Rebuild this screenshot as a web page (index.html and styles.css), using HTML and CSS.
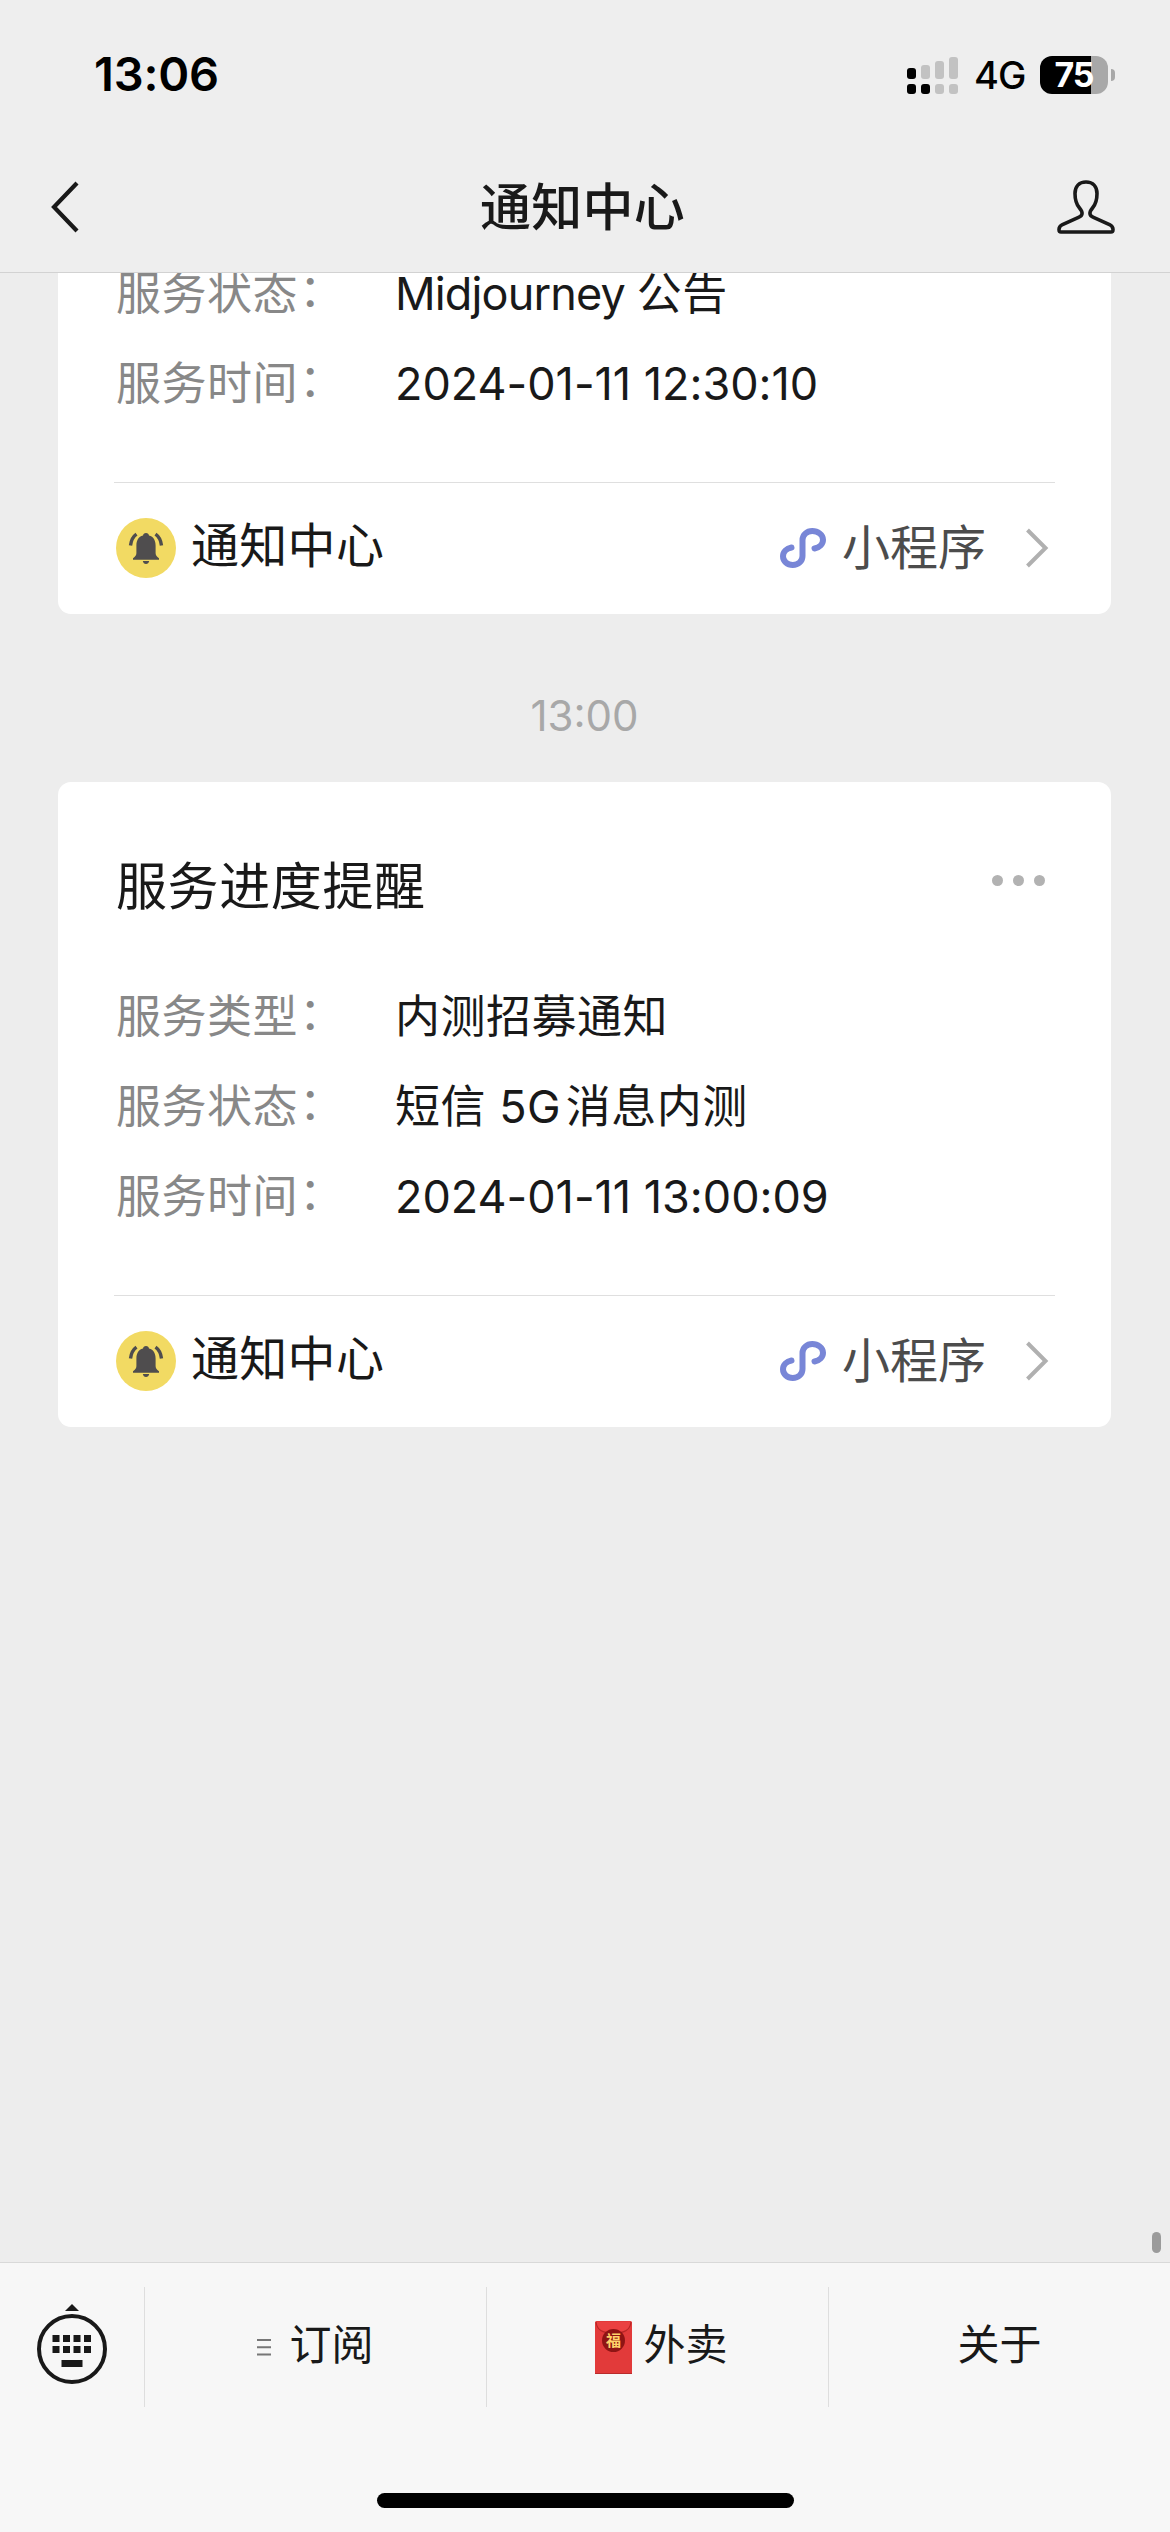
FILE: index.html
```html
<!DOCTYPE html>
<html lang="zh-CN">
<head>
<meta charset="utf-8">
<title>通知中心</title>
<link rel="stylesheet" href="styles.css">
</head>
<body>
<svg class="defs" aria-hidden="true">
  <symbol id="bell" viewBox="0 0 60 60">
    <circle cx="30" cy="30" r="30" fill="#f2da63"/>
    <path d="M30 15c1.800 0 2.800 1 3 2.600 4.600 1.200 6.600 5 6.600 9.800v7.600c0 2 1 3.600 3.400 5.200v1.500H17v-1.500c2.400-1.600 3.400-3.200 3.400-5.200v-7.600c0-4.800 2-8.600 6.600-9.800.2-1.600 1.200-2.600 3-2.600z" fill="#4f4d4e"/>
    <path d="M26.800 43h6.400c-.4 2-1.500 3-3.200 3s-2.800-1-3.200-3z" fill="#4f4d4e"/>
    <path d="M20.500 16.200q-5 3.500-6 11.300M39.500 16.200q5 3.500 6 11.300" fill="none" stroke="#4f4d4e" stroke-width="3.400"/>
  </symbol>
  <symbol id="mini" viewBox="0 0 46 40">
    <path d="M11.500 19.500C6.500 20.500 3 24 3 28.300 3 33.200 7.200 37 12.800 37s9.700-4 9.700-9V12c0-5 4.200-9 9.800-9S43 6.800 43 11.700c0 4.300-3.500 7.800-8.500 8.800" fill="none" stroke="#7886d7" stroke-width="6" stroke-linecap="round"/>
  </symbol>
  <symbol id="next" viewBox="0 0 24 40">
    <path d="M2.500 2 20.500 20 2.500 38" fill="none" stroke="#b0b0b0" stroke-width="4"/>
  </symbol>
</svg>
<div class="screen">
  <header class="top">
    <div class="status">
      <span class="clock">13:06</span>
      <div class="status-right">
        <svg class="signal" viewBox="0 0 51 38">
          <g fill="#c2c2c2"><rect x="14" y="9" width="9" height="14" rx="3"/><rect x="28" y="5" width="9" height="18" rx="3"/><rect x="42" y="1" width="9" height="22" rx="3"/><rect x="28" y="28" width="9" height="10" rx="3"/><rect x="42" y="28" width="9" height="10" rx="3"/></g>
          <g fill="#000"><rect y="12" width="9" height="11" rx="3"/><rect y="28" width="9" height="10" rx="3"/><rect x="14" y="28" width="9" height="10" rx="3"/></g>
        </svg>
        <span class="net">4G</span>
        <span class="battery">75</span>
        <span class="nub"></span>
      </div>
    </div>
    <nav class="nav">
      <svg class="back" viewBox="0 0 30 52"><path d="M27 2 4 26 27 50" fill="none" stroke="#191919" stroke-width="4.200"/></svg>
      <h1 class="title">通知中心</h1>
      <svg class="person" viewBox="0 0 58 54"><path d="M29 2c-7 0-11 4.500-11 11.500 0 6 1 10.500 4.500 14.500 3.800 4.500 3.300 7.500-1 9.300L5.500 44.500C3 45.800 2 47 2 49.500c0 1.800.6 2.500 2 2.500h50c1.400 0 2-.7 2-2.500 0-2.500-1-3.700-3.500-5L36.500 37.300c-4.300-1.800-4.800-4.800-1-9.300 3.500-4 4.500-8.500 4.500-14.500C40 6.500 36 2 29 2z" fill="none" stroke="#191919" stroke-width="3.600"/></svg>
    </nav>
  </header>
  <main class="feed">
    <section class="card card-cut">
      <dl class="fields">
        <div class="field"><dt>服务状态<span class="colon">：</span></dt><dd><span class="latin">Midjourney </span>公告</dd></div>
        <div class="field"><dt>服务时间<span class="colon">：</span></dt><dd class="date">2024-01-11 12:30:10</dd></div>
      </dl>
      <footer class="foot">
        <svg class="avatar"><use href="#bell"/></svg><span class="from">通知中心</span>
        <svg class="mini"><use href="#mini"/></svg><span class="app">小程序</span>
        <svg class="next"><use href="#next"/></svg>
      </footer>
    </section>
    <time class="stamp">13:00</time>
    <section class="card">
      <div class="head"><h2>服务进度提醒</h2><div class="more"><i></i><i></i><i></i></div></div>
      <dl class="fields">
        <div class="field"><dt>服务类型<span class="colon">：</span></dt><dd>内测招募通知</dd></div>
        <div class="field"><dt>服务状态<span class="colon">：</span></dt><dd>短信 5G<span class="thin"> </span>消息内测</dd></div>
        <div class="field"><dt>服务时间<span class="colon">：</span></dt><dd class="date">2024-01-11 13:00:09</dd></div>
      </dl>
      <footer class="foot">
        <svg class="avatar"><use href="#bell"/></svg><span class="from">通知中心</span>
        <svg class="mini"><use href="#mini"/></svg><span class="app">小程序</span>
        <svg class="next"><use href="#next"/></svg>
      </footer>
    </section>
    <span class="scrollbar"></span>
  </main>
  <footer class="bottom">
    <div class="menu">
      <div class="keys">
        <svg viewBox="0 0 70 80"><path d="M35 0 42 7H28z" fill="#191919"/><circle cx="35" cy="45" r="33" fill="none" stroke="#191919" stroke-width="4"/><path d="M15.500 31h7v7h-7zM26 31h7v7h-7zM36.500 31h7v7h-7zM47 31h7v7h-7zM15.500 42h7v7h-7zM26 42h7v7h-7zM36.500 42h7v7h-7zM47 42h7v7h-7zM24.500 56h21v7h-21z" fill="#191919"/></svg>
      </div>
      <div class="item"><svg class="lines" viewBox="0 0 14 17"><path d="M0 1h14M0 8.300h14M0 15.500h14" stroke="#777" stroke-width="2"/></svg><span class="label">订阅</span></div>
      <div class="item item-gift">
        <svg class="envelope" viewBox="0 0 37 53">
          <rect width="37" height="53" rx="1.500" fill="#e23a3a"/>
          <path d="M0 52h37v1H0z" fill="#b92b2b"/>
          <path d="M1 1C2 9 7 12 18.500 12S35 9 36 1" fill="#ea4141" stroke="#b82626" stroke-width="1.200"/>
          <circle cx="18.500" cy="19.500" r="11.500" fill="#8f1414"/>
          <text x="18.500" y="25.300" text-anchor="middle">福</text>
        </svg>
        <span class="label">外卖</span>
      </div>
      <div class="item"><span class="label">关于</span></div>
    </div>
    <div class="home"></div>
  </footer>
</div>
</body>
</html>
```
FILE: styles.css
```css
* { box-sizing: border-box; margin: 0; padding: 0; }
body { background: #ededed; font-family: Inter, "Noto Sans CJK SC", sans-serif; color: #191919; }
svg { display: block; flex: none; }
.defs { position: absolute; width: 0; height: 0; }
.screen { width: 1170px; height: 2532px; display: flex; flex-direction: column; overflow: hidden; }

.top { height: 273px; flex: none; border-bottom: 1px solid #d2d2d2; background: #eee; }
.status { height: 141px; padding: 8px 55px 0 94px; display: flex; align-items: center; justify-content: space-between; }
.clock { font-size: 47px; font-weight: 600; letter-spacing: -.2px; line-height: 56px; padding-bottom: 1px; color: #000; }
.status-right { display: flex; align-items: center; color: #000; }
.signal { width: 51px; height: 38px; }
.net { width: 51px; margin-left: 16px; font-size: 38px; font-weight: 450; letter-spacing: -1px; white-space: nowrap; }
.battery { width: 68px; height: 38px; margin-left: 15px; border-radius: 12px; background: linear-gradient(90deg, #000 75%, #a8a8a8 75%); color: #fff; font-size: 34px; line-height: 38px; font-weight: 700; letter-spacing: -1px; text-align: center; }
.nub { width: 4px; height: 12px; margin-left: 3px; border-radius: 0 6px 6px 0; background: #a8a8a8; }
.nav { height: 131px; padding: 0 55px 0 50px; display: flex; align-items: center; justify-content: space-between; }
.back { width: 30px; height: 52px; margin-right: 28px; }
.title { font-size: 51px; font-weight: 500; line-height: 72px; letter-spacing: .3px; padding-top: 2px; }
.person { width: 58px; height: 54px; }

.feed { flex: 1; min-height: 0; position: relative; padding: 0 59px 0 58px; overflow: hidden; }
.card { display: flow-root; background: #fff; border-radius: 13px; padding: 0 56px; }
.card-cut { border-radius: 0 0 13px 13px; height: 341px; }
.card-cut .fields { margin-top: -24px; height: 233px; }
.head { height: 190px; padding: 69px 10px 0 2px; display: flex; justify-content: space-between; }
.head h2 { font-size: 51px; line-height: 72px; font-weight: 400; letter-spacing: .6px; }
.more { display: flex; gap: 10px; padding-top: 24px; }
.more i { width: 11px; height: 11px; border-radius: 50%; background: #b2b2b2; }
.fields { height: 323px; font-size: 45px; padding-left: 2px; }
.field { height: 90px; line-height: 90px; display: flex; white-space: nowrap; letter-spacing: .5px; }
.field dt { width: 279px; color: #888; }
.colon { position: relative; left: 1px; top: -3px; }
.latin { letter-spacing: -.85px; }
.date { letter-spacing: -.02px; }
.thin { letter-spacing: -8px; }
.foot { height: 132px; border-top: 1px solid #dfdfdf; display: flex; align-items: center; padding: 0 6px 1px 2px; font-size: 48px; }
.avatar { width: 60px; height: 60px; }
.from { margin-left: 15px; line-height: 72px; letter-spacing: .3px; padding-bottom: 4px; }
.mini { width: 46px; height: 40px; margin-left: auto; }
.app { margin-left: 16px; color: #4c4c4c; line-height: 72px; }
.next { width: 24px; height: 40px; margin-left: 39px; }
.stamp { display: block; height: 168px; padding-top: 17px; line-height: 170px; text-align: center; color: #a8a8a8; font-size: 42px; }
.scrollbar { position: absolute; right: 9px; bottom: 9px; width: 9px; height: 21px; border-radius: 5px; background: #9b9b9b; }

.bottom { height: 270px; flex: none; border-top: 1px solid #d9d9d9; background: #f7f7f7; }
.menu { height: 168px; padding: 24px 0; display: flex; }
.keys { width: 144px; padding: 17px 0 0 37px; }
.keys svg { width: 70px; height: 80px; }
.item { flex: 0 0 342px; border-left: 1px solid #dedede; display: flex; align-items: center; justify-content: center; font-size: 42px; }
.label { line-height: 60px; padding-bottom: 4px; }
.lines { width: 14px; height: 17px; margin-right: 18px; }
.item-gift { padding-left: 8px; }
.envelope { width: 37px; height: 53px; margin-right: 11px; }
.envelope text { font-size: 15px; font-weight: 700; fill: #ffd36a; }
.home { width: 417px; height: 15px; margin: 62px auto 0; border-radius: 8px; background: #000; }
```
